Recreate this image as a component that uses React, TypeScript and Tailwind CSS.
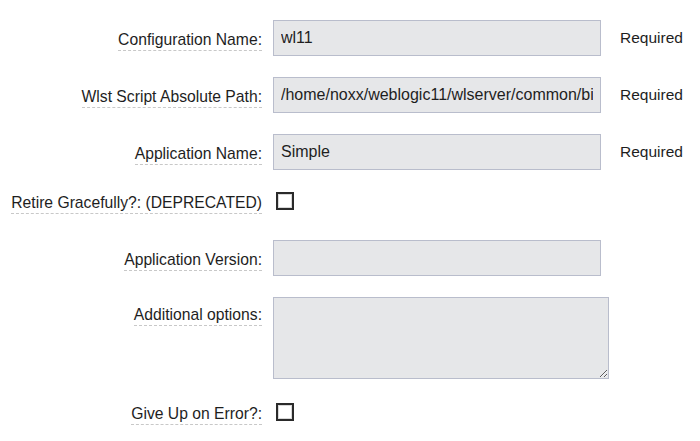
const font = { fontFamily: '"Liberation Sans", Arial, sans-serif' };

function Label({ text, className }: { text: string; className?: string }) {
  return (
    <div className={`w-[262px] shrink-0 text-right text-[15.7px] leading-[18px] ${className ?? 'pt-[4px]'}`}>
      <span className="border-b border-dashed border-[#c8c8c8] pb-[2px] text-[#1e1e1e]">{text}</span>
    </div>
  );
}

function TextRow({ label, value, required, className }: { label: string; value: string; required?: boolean; className?: string }) {
  return (
    <div className={`flex items-center ${className ?? ''}`}>
      <Label text={label} />
      <input
        readOnly
        value={value}
        className="ml-[11px] h-[36px] w-[328px] border border-[#b9bdcc] bg-[#e6e7e9] px-[7px] text-[16px] text-[#1e1e1e] outline-none"
        style={font}
      />
      {required && <span className="ml-[19px] text-[15.5px] leading-[18px] text-[#1e1e1e]">Required</span>}
    </div>
  );
}

function Checkbox() {
  return <span className="ml-[14px] block h-[18px] w-[18px] border-2 border-[#2a2a2a] bg-white shadow-[inset_0_0_0_1px_#d8d8d8]" />;
}

export default function App() {
  return (
    <div className="min-h-screen w-[700px] bg-white pt-[20px]" style={font}>
      <TextRow label="Configuration Name:" value="wl11" required />
      <TextRow label="Wlst Script Absolute Path:" value="/home/noxx/weblogic11/wlserver/common/bin/wlst.sh" required className="mt-[21px]" />
      <TextRow label="Application Name:" value="Simple" required className="mt-[21px]" />
      <div className="mt-[22px] flex items-start">
        <Label text="Retire Gracefully?: (DEPRECATED)" className="pt-[2px]" />
        <Checkbox />
      </div>
      <TextRow label="Application Version:" value="" className="mt-[28px]" />
      <div className="mt-[21px] flex items-start">
        <Label text="Additional options:" className="pt-[9px]" />
        <textarea
          readOnly
          className="ml-[11px] block h-[82px] w-[336px] resize border border-[#b9bdcc] bg-[#e6e7e9] outline-none"
        />
      </div>
      <div className="mt-[24px] flex items-start">
        <Label text="Give Up on Error?:" className="pt-[2px]" />
        <Checkbox />
      </div>
    </div>
  );
}
